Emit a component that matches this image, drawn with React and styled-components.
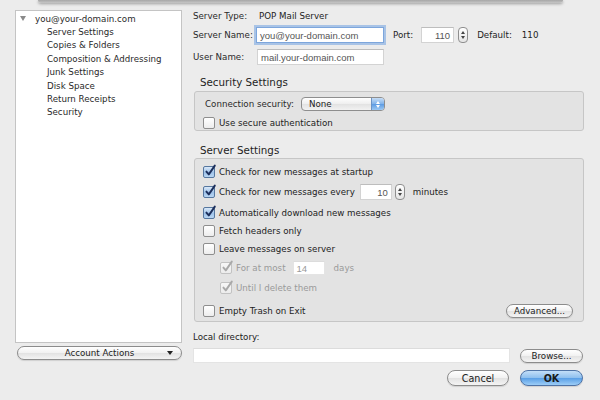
import React from "react"
import styled, { createGlobalStyle } from "styled-components"

const GlobalStyle = createGlobalStyle`
  html, body {
    margin: 0;
    padding: 0;
    background: #ececec;
  }
  body {
    font-family: "DejaVu Sans", "Liberation Sans", sans-serif;
    font-size: 8.7px;
    color: #222;
  }
`

const Window = styled.div`
  position: relative;
  width: 600px;
  height: 400px;
  overflow: hidden;
  box-sizing: border-box;
  padding-left: 15px;
  display: grid;
  grid-template-columns: 167px 391px;
  column-gap: 11px;
  background: #ececec;
`

// shadow of the parent window's sheet edge, lies over the top of the page
const SheetEdge = styled.div`
  position: absolute;
  top: 0;
  left: 38px;
  width: 525px;
  height: 3px;
  background: linear-gradient(#a6a6a6, #c6c6c6);
  border-radius: 0 0 3px 3px;
  box-shadow: 0 1px 3px rgba(0, 0, 0, 0.35);
`

/* ---------- sidebar ---------- */

const Sidebar = styled.div`
  display: flex;
  flex-direction: column;
  padding-top: 10px;
`

const AccountList = styled.ul`
  margin: 0;
  padding: 1px 0 0;
  list-style: none;
  height: 333px;
  box-sizing: border-box;
  background: #fff;
  border: 1px solid #c4c4c4;
`

const TreeItem = styled.li`
  display: flex;
  align-items: center;
  height: 13.4px;
  padding-left: ${p => (p.$root ? 4 : 31)}px;
  white-space: nowrap;
  color: #2a2a2a;
`

const Disclosure = styled.span`
  width: 0;
  height: 0;
  border-left: 3px solid transparent;
  border-right: 3px solid transparent;
  border-top: 5px solid #8a8a8a;
  margin-right: 9px;
`

const PillButton = styled.div`
  box-sizing: border-box;
  width: ${p => p.$w}px;
  height: ${p => p.$h || 14}px;
  margin-left: ${p => p.$ml || 0}px;
  border: 1px solid #8c8c8c;
  border-radius: 8px;
  background: linear-gradient(#ffffff, #f1f1f1 50%, #e2e2e2 51%, #f4f4f4);
  box-shadow: 0 1px 1px rgba(0, 0, 0, 0.12);
  display: flex;
  align-items: center;
  justify-content: center;
  flex: none;
  color: #222;
  font-size: ${p => (p.$big ? 9.6 : 8.7)}px;
`

const AccountActions = styled(PillButton)`
  margin: 3px 0 0 2px;
  display: grid;
  grid-template-columns: 22px 1fr 22px;
  justify-items: center;
`

const DropArrow = styled.span`
  width: 0;
  height: 0;
  border-left: 3px solid transparent;
  border-right: 3px solid transparent;
  border-top: 4px solid #222;
`

/* ---------- main panel ---------- */

const Main = styled.div`
  display: flex;
  flex-direction: column;
  padding-top: 9px;
`

const Row = styled.div`
  display: flex;
  align-items: center;
  height: ${p => p.$h || 16}px;
  margin-top: ${p => p.$mt || 0}px;
  padding-left: ${p => p.$pl || 0}px;
  padding-right: ${p => p.$pr || 0}px;
  justify-content: ${p => (p.$spread ? "space-between" : p.$end ? "flex-end" : "flex-start")};
  white-space: nowrap;
`

const Label = styled.span`
  width: ${p => p.$w}px;
  flex: none;
  color: #2a2a2a;
`

const Text = styled.span`
  margin-left: ${p => p.$ml || 0}px;
  color: ${p => (p.$dim ? "#9a9a9a" : "#222")};
`

const TextField = styled.div`
  box-sizing: border-box;
  width: ${p => p.$w}px;
  height: ${p => p.$h || 16}px;
  margin-left: ${p => p.$ml || 0}px;
  flex: none;
  background: #fff;
  border: 1px solid ${p => (p.$focus ? "#7da6dc" : p.$flat ? "#e4e4e4" : "#d3d3d3")};
  border-top-color: ${p => (p.$focus ? "#7da6dc" : p.$flat ? "#dcdcdc" : "#bdbdbd")};
  box-shadow: ${p => (p.$focus ? "0 0 0 2px rgba(124, 168, 226, 0.6)" : "none")};
  font-family: "Liberation Sans", Arial, sans-serif;
  font-size: 9.5px;
  color: ${p => (p.$dim ? "#9a9a9a" : "#555")};
  padding: 0 3px;
  display: flex;
  align-items: center;
  justify-content: ${p => (p.$right ? "flex-end" : "flex-start")};
`

const Stepper = styled.div`
  box-sizing: border-box;
  width: 10px;
  height: 16px;
  margin-left: ${p => p.$ml || 4}px;
  flex: none;
  border: 1px solid #8f8f8f;
  border-radius: 4px;
  background: linear-gradient(#ffffff, #e4e4e4);
  display: flex;
  flex-direction: column;
  align-items: center;
  justify-content: space-evenly;

  &::before,
  &::after {
    content: "";
    border-left: 2px solid transparent;
    border-right: 2px solid transparent;
  }
  &::before {
    border-bottom: 3px solid #444;
  }
  &::after {
    border-top: 3px solid #444;
  }
`

const Heading = styled.div`
  height: 12px;
  margin-top: ${p => p.$mt}px;
  padding-left: 7px;
  font-size: 10.3px;
  line-height: 12px;
  color: #1e1e1e;
`

const GroupBox = styled.div`
  box-sizing: border-box;
  width: 390px;
  height: ${p => p.$h}px;
  margin: ${p => p.$mt}px 0 0 1px;
  padding: 5px 0 0 8px;
  background: #e3e3e3;
  border: 1px solid #c6c6c6;
  border-radius: 3px;
`

const Popup = styled.div`
  box-sizing: border-box;
  width: 84px;
  height: 14px;
  border: 1px solid #8e8e8e;
  border-radius: 4px;
  background: linear-gradient(#ffffff, #eeeeee 50%, #e2e2e2 51%, #f2f2f2);
  display: flex;
  align-items: center;
  overflow: hidden;
`

const PopupValue = styled.span`
  flex: 1;
  padding-left: 7px;
`

const PopupArrows = styled.span`
  width: 12px;
  height: 100%;
  background: linear-gradient(#c6ddf6, #7fb2ea 50%, #5c9be3 51%, #9cc8f3);
  border-left: 1px solid #6c94c6;
  display: flex;
  flex-direction: column;
  align-items: center;
  justify-content: center;
  gap: 1px;

  &::before,
  &::after {
    content: "";
    border-left: 2px solid transparent;
    border-right: 2px solid transparent;
  }
  &::before {
    border-bottom: 3px solid #fff;
  }
  &::after {
    border-top: 3px solid #fff;
  }
`

const CheckBox = styled.span`
  position: relative;
  box-sizing: border-box;
  width: 12px;
  height: 12px;
  margin-right: 4px;
  flex: none;
  border-radius: 2px;
  border: 1px solid ${p => (p.$dim ? "#c2c2c2" : p.$checked ? "#56779f" : "#8e8e8e")};
  background: ${p =>
    p.$dim
      ? "linear-gradient(#f7f7f7, #ececec)"
      : p.$checked
      ? "linear-gradient(#d9e8f8, #9fc3ea 55%, #b9d6f3)"
      : "linear-gradient(#ffffff, #ededed)"};

  svg {
    position: absolute;
    left: 0;
    top: -3px;
  }
`

const Check = ({ checked, dim }) => (
  <CheckBox $checked={checked} $dim={dim}>
    {checked && (
      <svg width="13" height="13" viewBox="0 0 13 13">
        <path
          d="M2.4 7.6 L4.8 10.4 L10.8 1.6"
          fill="none"
          stroke={dim ? "#a9a9a9" : "#1c2f5c"}
          strokeWidth="1.9"
          strokeLinecap="round"
          strokeLinejoin="round"
        />
      </svg>
    )}
  </CheckBox>
)

const OkButton = styled(PillButton)`
  border-color: #4f73a6;
  background: linear-gradient(#c3def8, #8fc0ef 48%, #5a9fe6 52%, #9ccdf7);
  font-weight: bold;
  color: #1a1a1a;
`

const items = [
  "Server Settings",
  "Copies & Folders",
  "Composition & Addressing",
  "Junk Settings",
  "Disk Space",
  "Return Receipts",
  "Security",
]

export default function App() {
  return (
    <>
      <GlobalStyle />
      <Window>
        <SheetEdge />

        <Sidebar>
          <AccountList>
            <TreeItem $root>
              <Disclosure />
              you@your-domain.com
            </TreeItem>
            {items.map(i => (
              <TreeItem key={i}>{i}</TreeItem>
            ))}
          </AccountList>
          <AccountActions $w={165}>
            <span />
            <span>Account Actions</span>
            <DropArrow />
          </AccountActions>
        </Sidebar>

        <Main>
          <Row $h={14}>
            <Label $w={66}>Server Type:</Label>
            <Text>POP Mail Server</Text>
          </Row>
          <Row $mt={4}>
            <Label $w={63}>Server Name:</Label>
            <TextField $w={128} $focus>you@your-domain.com</TextField>
            <Text $ml={9}>Port:</Text>
            <TextField $w={33} $ml={8} $right>110</TextField>
            <Stepper />
            <Text $ml={9}>Default:</Text>
            <Text $ml={10}>110</Text>
          </Row>
          <Row $mt={6}>
            <Label $w={64}>User Name:</Label>
            <TextField $w={127}>mail.your-domain.com</TextField>
          </Row>

          <Heading $mt={11}>Security Settings</Heading>
          <GroupBox $h={40} $mt={3}>
            <Row $h={14} $pl={2}>
              <Label $w={96}>Connection security:</Label>
              <Popup>
                <PopupValue>None</PopupValue>
                <PopupArrows />
              </Popup>
            </Row>
            <Row $h={12} $mt={6}>
              <Check />
              <Text>Use secure authentication</Text>
            </Row>
          </GroupBox>

          <Heading $mt={13}>Server Settings</Heading>
          <GroupBox $h={164} $mt={2}>
            <Row>
              <Check checked />
              <Text>Check for new messages at startup</Text>
            </Row>
            <Row $mt={4}>
              <Check checked />
              <Text>Check for new messages every</Text>
              <TextField $w={32} $ml={5} $right>10</TextField>
              <Stepper $ml={3} />
              <Text $ml={8}>minutes</Text>
            </Row>
            <Row $mt={5}>
              <Check checked />
              <Text>Automatically download new messages</Text>
            </Row>
            <Row $mt={2}>
              <Check />
              <Text>Fetch headers only</Text>
            </Row>
            <Row $mt={2}>
              <Check />
              <Text>Leave messages on server</Text>
            </Row>
            <Row $mt={3} $pl={17}>
              <Check checked dim />
              <Text $dim>For at most</Text>
              <TextField $w={32} $h={14} $ml={7} $dim $flat>14</TextField>
              <Text $ml={9} $dim>days</Text>
            </Row>
            <Row $mt={4} $pl={17}>
              <Check checked dim />
              <Text $dim>Until I delete them</Text>
            </Row>
            <Row $mt={7} $spread $pr={10}>
              <Row>
                <Check />
                <Text>Empty Trash on Exit</Text>
              </Row>
              <PillButton $w={67}>Advanced...</PillButton>
            </Row>
          </GroupBox>

          <Row $h={12} $mt={9}>
            <Text>Local directory:</Text>
          </Row>
          <Row $h={15} $mt={5}>
            <TextField $w={317} $h={15} $flat />
            <PillButton $w={63} $ml={10}>Browse...</PillButton>
          </Row>
          <Row $mt={7} $end $pr={1}>
            <PillButton $w={62} $h={16} $big>Cancel</PillButton>
            <OkButton $w={63} $h={16} $ml={11} $big>OK</OkButton>
          </Row>
        </Main>
      </Window>
    </>
  )
}
